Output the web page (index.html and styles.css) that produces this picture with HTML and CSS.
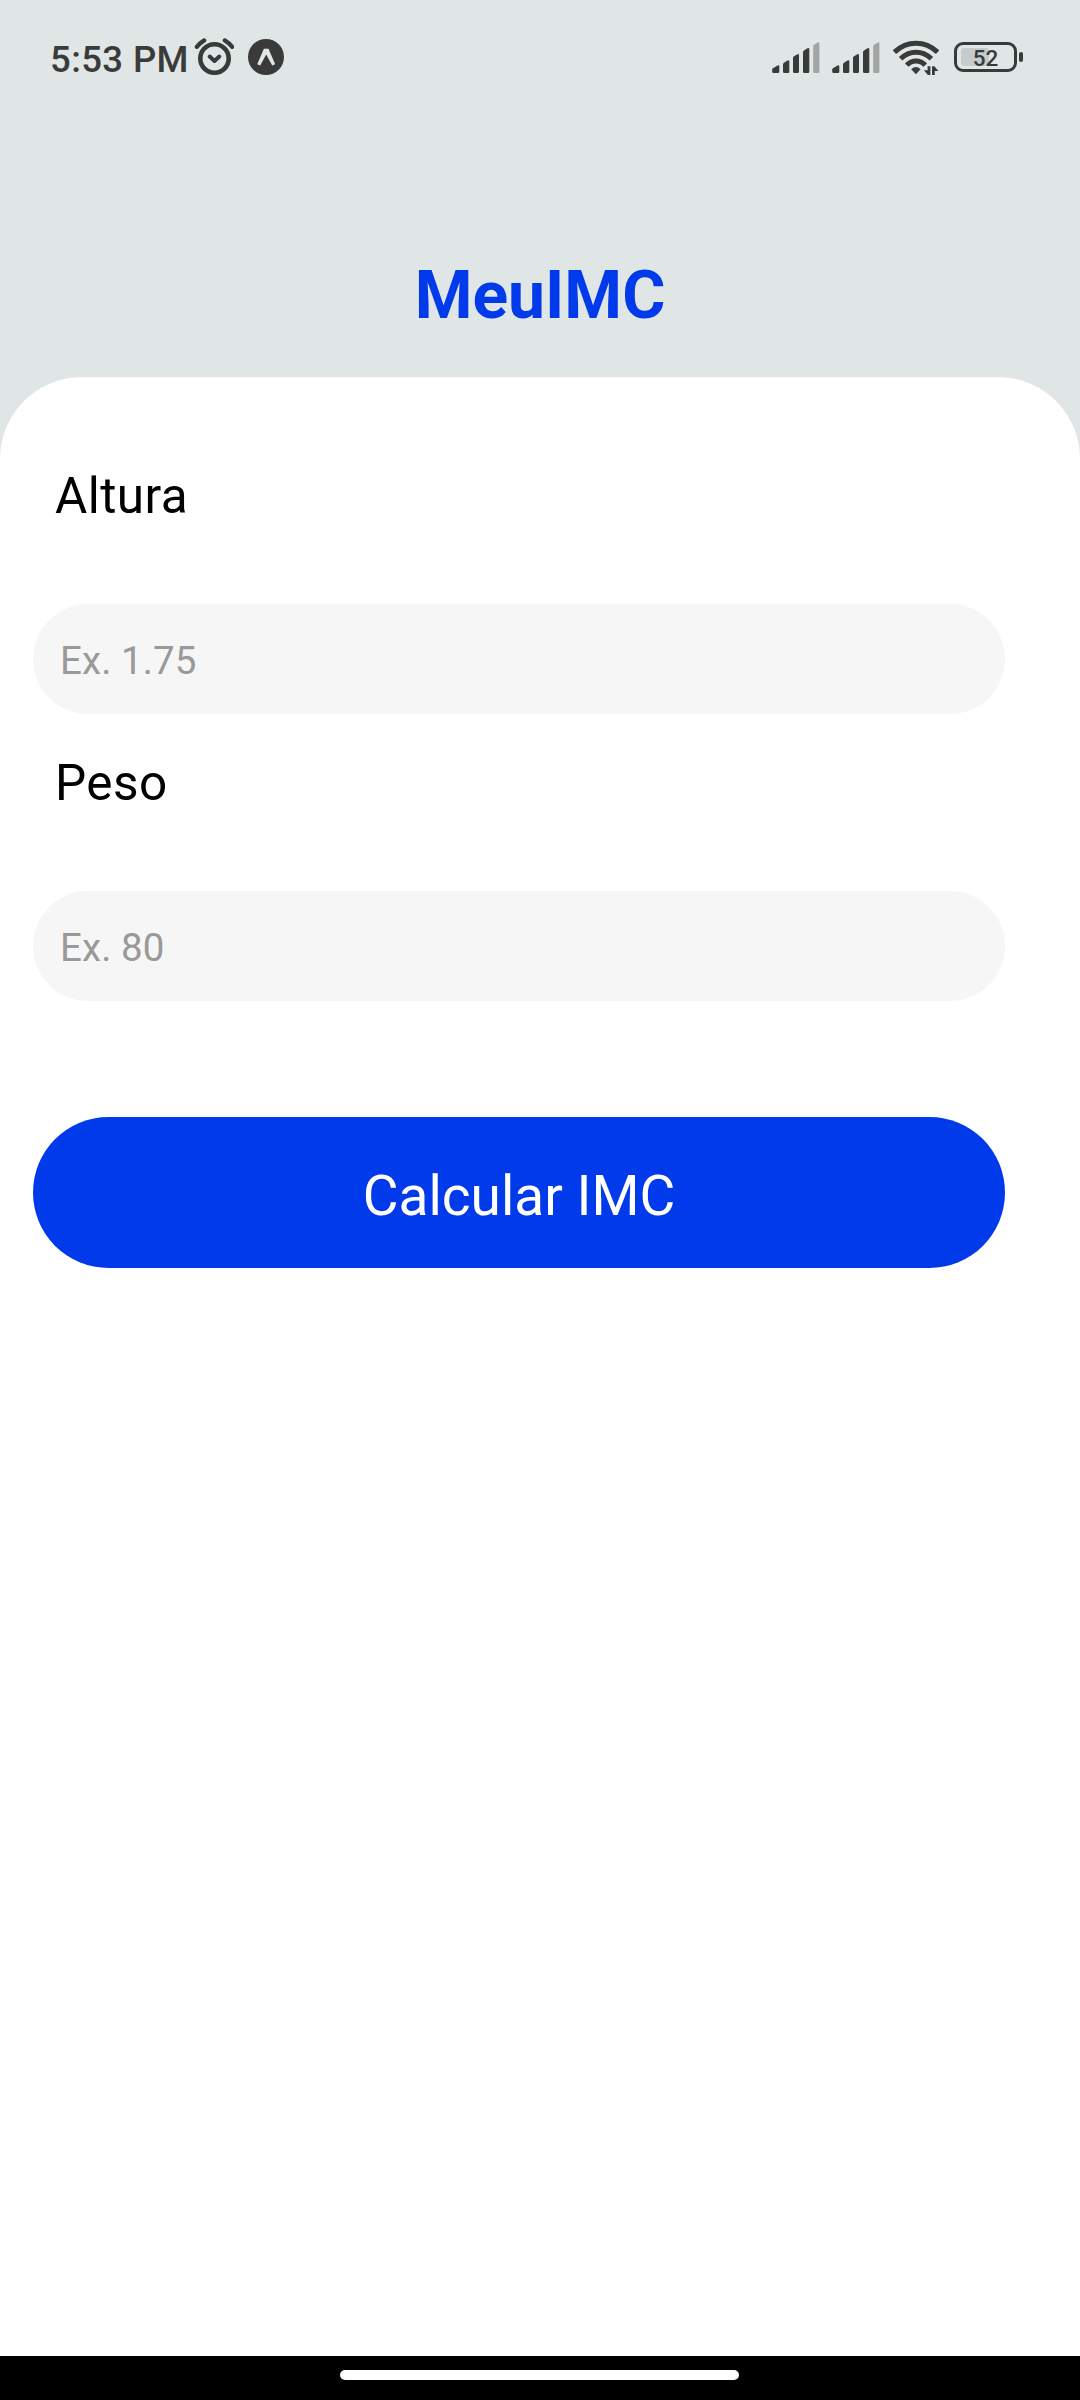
FILE: index.html
```html
<!DOCTYPE html>
<html lang="pt-BR">
<head>
<meta charset="utf-8">
<title>MeuIMC</title>
<link rel="stylesheet" href="styles.css">
</head>
<body>
<div class="screen">
  <header class="status-bar">
    <span class="clock">5:53 PM</span>
    <svg class="alarm" width="40" height="38" viewBox="0 0 40 38" fill="none" stroke="#393b3a" stroke-linecap="round" stroke-linejoin="round">
      <circle cx="20.500" cy="20.500" r="14.200" stroke-width="4.600"/>
      <path d="M15.700 18.500l4.800 4.500 4.800-4.500" stroke-width="4"/>
      <path d="M2.800 8.800Q6 5 10.200 2.400M38.200 8.800Q35 5 30.800 2.400" stroke-width="4.200"/>
    </svg>
    <svg class="app" width="36" height="36" viewBox="0 0 36 36">
      <circle cx="18" cy="18" r="18" fill="#393b3a"/>
      <path d="M9.200 25.200L15.900 9.700H20.500L27.200 25.200L24.200 26.600L18.200 15.500L12.200 26.600z" fill="#e0e6e6"/>
    </svg>
    <svg class="signals" width="108" height="32" viewBox="0 0 108 32" fill="#393b3a">
      <g id="signal">
        <path d="M.2 29.500V27.500Q.2 26.700 1 26.200L5 23.800Q7.300 22.600 7.300 24.500V29.500Q7.300 31 6 31H1.500Q.2 31 .2 29.500z"/>
        <path d="M11 29.500V22.500Q11 21.500 12 20.800L15 18.700Q17.300 17.300 17.300 19.500V29.500Q17.300 31 16 31H12.300Q11 31 11 29.500z"/>
        <path d="M21 29.500V16Q21 15 22 14.300L25 12.500Q27 11.300 27 13.500V29.500Q27 31 25.700 31H22.300Q21 31 21 29.500z"/>
        <path d="M31 29.500V10.300Q31 9.300 32 8.600L35 6.600Q37.300 5.300 37.300 7.500V29.500Q37.300 31 36 31H32.300Q31 31 31 29.500z"/>
        <path fill="#a0a4a3" d="M41.200 29.500V4.500Q41.200 3.500 42.200 2.800L45.200.8Q47.400-.5 47.400 1.700V29.500Q47.400 31 46.100 31H42.500Q41.200 31 41.200 29.500z"/>
      </g>
      <use href="#signal" x="60"/>
    </svg>
    <svg class="wifi" width="46" height="36" viewBox="0 0 46 36">
      <g fill="none" stroke="#393b3a" stroke-width="5">
        <path d="M1.400 12.200C14 .2 32 .2 44.600 12.200"/>
        <path d="M7.600 18.800C16.500 10 29.500 10 38.400 18.800"/>
        <path d="M13.700 25.100C19 19.500 27 19.500 32.300 25.100"/>
      </g>
      <path fill="#393b3a" d="M22.900 34.200L18.200 29.300Q22.900 24.800 27.600 29.300z"/>
      <path fill="#393b3a" d="M34.600 26.200h2.800v8.800h-2.500l-4-4.800h3.700zM39 26.200h2.400l4 4.700h-3.600v4.100H39z"/>
    </svg>
    <div class="battery">
      <div class="battery-body"><span class="battery-level"></span><span class="battery-text">52</span></div>
      <div class="battery-tip"></div>
    </div>
  </header>
  <h1 class="title">MeuIMC</h1>
  <main class="card">
    <div class="label">Altura</div>
    <div class="field">Ex. 1.75</div>
    <div class="label label-next">Peso</div>
    <div class="field">Ex. 80</div>
    <button class="submit" type="button">Calcular IMC</button>
  </main>
  <footer class="nav-bar"><div class="nav-handle"></div></footer>
</div>
</body>
</html>
```

FILE: styles.css
```css
* {
  box-sizing: border-box;
}

body {
  margin: 0;
  font-family: Roboto, "Liberation Sans", sans-serif;
}

.screen {
  display: flex;
  flex-direction: column;
  width: 1080px;
  height: 2400px;
  background: #e0e6e6;
}

.status-bar {
  display: flex;
  align-items: flex-start;
  height: 257px;
  padding: 38px 57px 0 50px;
  color: #393b3a;
}

.clock {
  width: 144px;
  margin-top: 1px;
  font-size: 36.5px;
  font-weight: 500;
  line-height: 42px;
  letter-spacing: 0.4px;
  white-space: nowrap;
}

.alarm {
  flex: none;
}

.app {
  flex: none;
  margin: 1px 0 0 14px;
}

.signals {
  flex: none;
  margin: 4px 0 0 auto;
}

.wifi {
  flex: none;
  margin: 2px 0 0 13px;
}

.battery {
  display: flex;
  align-items: center;
  gap: 2px;
  margin: 4px 0 0 15px;
}

.battery-body {
  position: relative;
  width: 63px;
  height: 30px;
  border: 3px solid #393b3a;
  border-radius: 9px;
  text-align: center;
}

.battery-level {
  position: absolute;
  top: 3px;
  left: 4px;
  width: 28px;
  height: 18px;
  border-radius: 3px;
  background: #c6cbcb;
}

.battery-text {
  position: relative;
  display: block;
  font-size: 22.5px;
  font-weight: 500;
  line-height: 26px;
}

.battery-tip {
  width: 4px;
  height: 10px;
  border-radius: 2px;
  background: #393b3a;
}

.title {
  margin: 0;
  height: 120px;
  color: #003aeb;
  font-size: 66px;
  font-weight: 700;
  line-height: 78px;
  text-align: center;
}

.card {
  flex: 1;
  display: flex;
  flex-direction: column;
  padding: 90px 75px 0 33px;
  border-radius: 82px 82px 0 0;
  background: #fff;
}

.label {
  margin-bottom: 79px;
  padding-left: 22px;
  color: #000;
  font-size: 49.5px;
  line-height: 58px;
  letter-spacing: 0.45px;
}

.label-next {
  margin-top: 40px;
}

.field {
  height: 110px;
  padding: 2px 27px 0;
  border-radius: 55px;
  background: #f6f6f6;
  color: #999;
  font-size: 38.5px;
  line-height: 110px;
  letter-spacing: 0.1px;
}

.submit {
  height: 151px;
  margin-top: 116px;
  padding: 7px 0 0;
  border: 0;
  border-radius: 76px;
  background: #003aeb;
  color: #fff;
  font-family: inherit;
  font-size: 55px;
}

.nav-bar {
  height: 44px;
  padding-top: 14px;
  background: #000;
}

.nav-handle {
  width: 399px;
  height: 10px;
  margin-left: 340px;
  border-radius: 5px;
  background: #fff;
}
```
